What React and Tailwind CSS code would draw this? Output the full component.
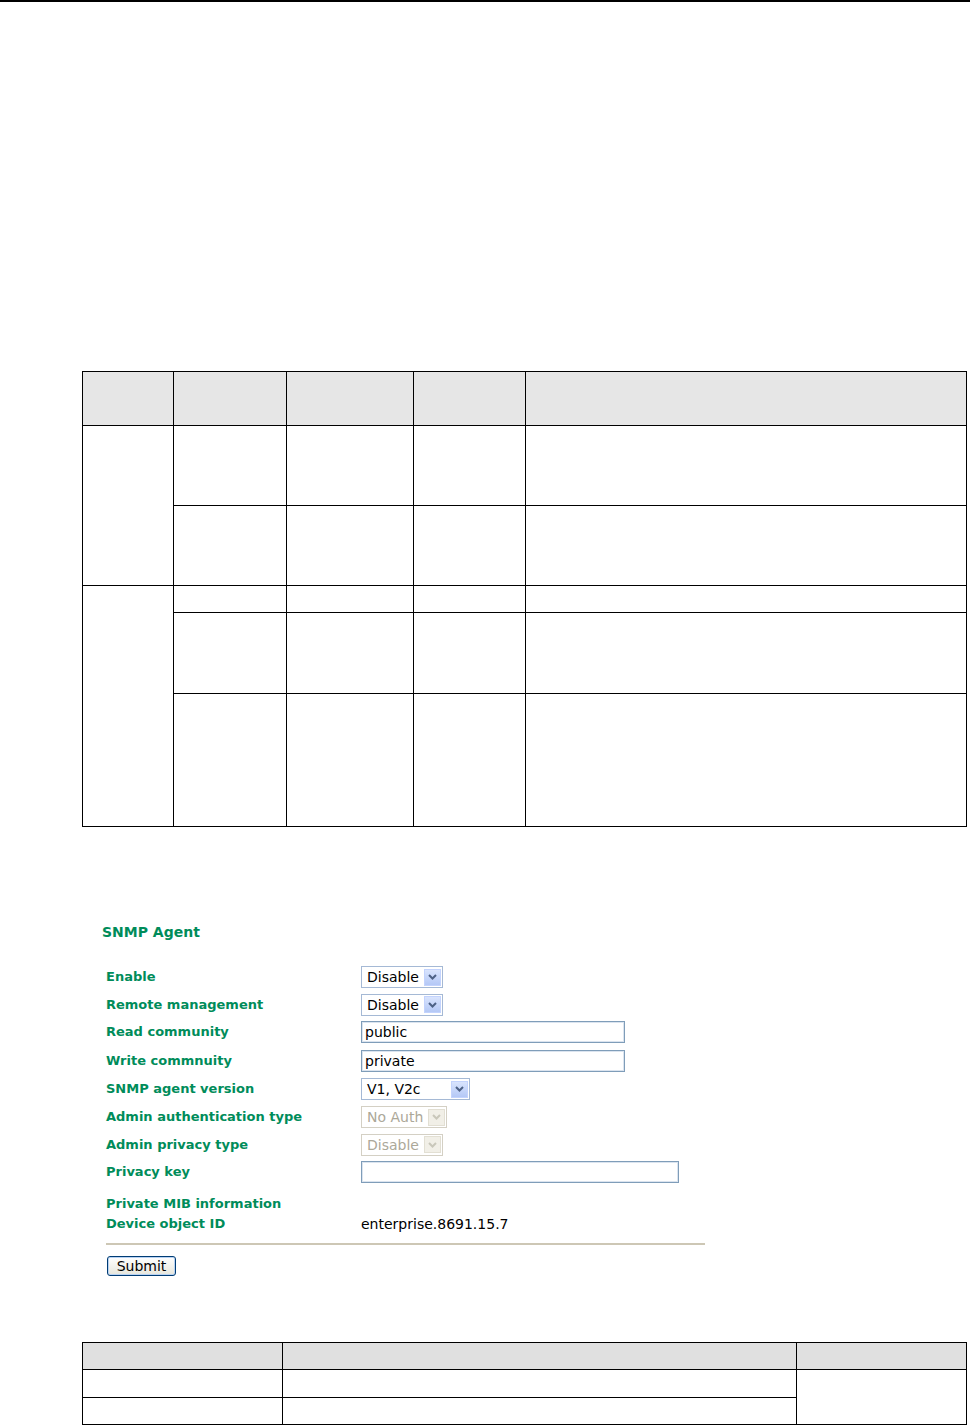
import React from 'react';

const GREEN = 'text-[#008c5a]';

const Chevron = ({ disabled }) => (
  <svg width="9" height="6" viewBox="0 0 9 6">
    <path
      d="M1 1 L4.5 4.5 L8 1"
      fill="none"
      stroke={disabled ? '#c9c7ba' : '#4d6185'}
      strokeWidth="2"
    />
  </svg>
);

const Select = ({ value, width, disabled }) => (
  <div
    className={`flex items-center h-[22px] border bg-white ${
      disabled ? 'border-[#d4d0c4]' : 'border-[#a5b9d5]'
    }`}
    style={{ width }}
  >
    <span
      className={`flex-1 pl-[5px] text-[14px] leading-none whitespace-nowrap ${
        disabled ? 'text-[#aca899]' : 'text-black'
      }`}
    >
      {value}
    </span>
    <span
      className={`mr-[1px] flex items-center justify-center w-[17px] h-[17px] ${
        disabled
          ? 'bg-[#f1efe7] border border-[#e2dfd3]'
          : 'bg-gradient-to-b from-[#d9e4fd] to-[#b4c8f6] border border-[#c3d3fd]'
      }`}
    >
      <Chevron disabled={disabled} />
    </span>
  </div>
);

const TextInput = ({ value, width }) => (
  <div
    className="flex items-center h-[22px] border border-[#7f9db9] bg-white shadow-[inset_0_0_0_1px_#dbe4ef] pl-[3px] text-[14px] leading-none"
    style={{ width }}
  >
    {value}
  </div>
);

const FormRow = ({ label, h, children }) => (
  <div className="flex items-center" style={{ height: h }}>
    <div className={`w-[255px] font-bold text-[13px] ${GREEN}`}>{label}</div>
    {children}
  </div>
);

const cell = 'border-[1.5px] border-black p-0';

const App = () => {
  return (
    <div className="w-[970px] bg-white font-['DejaVu_Sans',sans-serif] text-black">
      <div className="h-[2px] bg-black" />

      {/* main table */}
      <div className="pl-[82px] pt-[369px]">
        <table className="border-collapse table-fixed w-[884px]">
          <colgroup>
            <col className="w-[91px]" />
            <col className="w-[113px]" />
            <col className="w-[127px]" />
            <col className="w-[112px]" />
            <col className="w-[441px]" />
          </colgroup>
          <thead>
            <tr className="h-[54px] bg-[#e6e6e6]">
              <th className={cell} />
              <th className={cell} />
              <th className={cell} />
              <th className={cell} />
              <th className={cell} />
            </tr>
          </thead>
          <tbody>
            <tr className="h-[80px]">
              <td className={cell} rowSpan={2} />
              <td className={cell} />
              <td className={cell} />
              <td className={cell} />
              <td className={cell} />
            </tr>
            <tr className="h-[80px]">
              <td className={cell} />
              <td className={cell} />
              <td className={cell} />
              <td className={cell} />
            </tr>
            <tr className="h-[27px]">
              <td className={cell} rowSpan={3} />
              <td className={cell} />
              <td className={cell} />
              <td className={cell} />
              <td className={cell} />
            </tr>
            <tr className="h-[81px]">
              <td className={cell} />
              <td className={cell} />
              <td className={cell} />
              <td className={cell} />
            </tr>
            <tr className="h-[133px]">
              <td className={cell} />
              <td className={cell} />
              <td className={cell} />
              <td className={cell} />
            </tr>
          </tbody>
        </table>
      </div>

      {/* SNMP agent form */}
      <div className="pl-[102px] mt-[95px]">
        <div className={`h-[20px] flex items-center font-bold text-[14px] ${GREEN}`}>SNMP Agent</div>
        <div className="pl-[4px] mt-[21px]">
          <FormRow label="Enable" h={28}>
            <Select value="Disable" width={82} />
          </FormRow>
          <FormRow label="Remote management" h={27}>
            <Select value="Disable" width={82} />
          </FormRow>
          <FormRow label="Read community" h={28}>
            <TextInput value="public" width={264} />
          </FormRow>
          <FormRow label="Write commnuity" h={29}>
            <TextInput value="private" width={264} />
          </FormRow>
          <FormRow label="SNMP agent version" h={28}>
            <Select value="V1, V2c" width={109} />
          </FormRow>
          <FormRow label="Admin authentication type" h={28}>
            <Select value="No Auth" width={86} disabled />
          </FormRow>
          <FormRow label="Admin privacy type" h={27}>
            <Select value="Disable" width={82} disabled />
          </FormRow>
          <FormRow label="Privacy key" h={28}>
            <TextInput value="" width={318} />
          </FormRow>
          <div className="mt-[8px]">
            <FormRow label="Private MIB information" h={20} />
            <FormRow label="Device object ID" h={20}>
              <span className="text-[14px]">enterprise.8691.15.7</span>
            </FormRow>
          </div>
          <div className="mt-[9px] w-[599px] h-[2px] bg-[#cdc7b5]" />
          <button className="mt-[11px] ml-[1px] w-[69px] h-[20px] rounded-[3px] border border-[#003c74] bg-gradient-to-b from-white to-[#e6e6dc] shadow-[inset_0_0_0_1px_#b8d2f3] text-[14px] leading-none">
            Submit
          </button>
        </div>
      </div>

      {/* bottom table */}
      <div className="pl-[82px] mt-[64px]">
        <table className="border-collapse table-fixed w-[884px]">
          <colgroup>
            <col className="w-[200px]" />
            <col className="w-[514px]" />
            <col className="w-[170px]" />
          </colgroup>
          <thead>
            <tr className="h-[27px] bg-[#e0e0e0]">
              <th className={cell} />
              <th className={cell} />
              <th className={cell} />
            </tr>
          </thead>
          <tbody>
            <tr className="h-[28px]">
              <td className={cell} />
              <td className={cell} />
              <td className={cell} rowSpan={2} />
            </tr>
            <tr className="h-[27px]">
              <td className={cell} />
              <td className={cell} />
            </tr>
          </tbody>
        </table>
      </div>
    </div>
  );
};

export default App;
